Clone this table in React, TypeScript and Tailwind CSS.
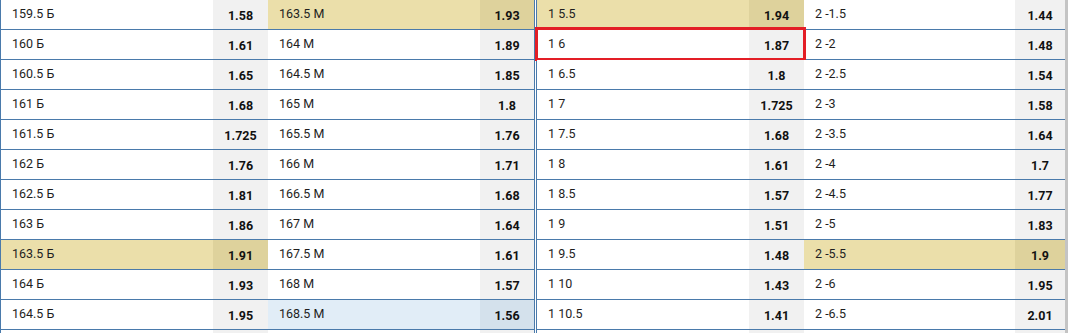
type Cell = { label: string; odds: string; hl?: 'yellow' | 'blue' };

// last row of each column is only a few pixels tall on screen, so it stays blank
const colA: Cell[] = [
  { label: '159.5 Б', odds: '1.58' },
  { label: '160 Б', odds: '1.61' },
  { label: '160.5 Б', odds: '1.65' },
  { label: '161 Б', odds: '1.68' },
  { label: '161.5 Б', odds: '1.725' },
  { label: '162 Б', odds: '1.76' },
  { label: '162.5 Б', odds: '1.81' },
  { label: '163 Б', odds: '1.86' },
  { label: '163.5 Б', odds: '1.91', hl: 'yellow' },
  { label: '164 Б', odds: '1.93' },
  { label: '164.5 Б', odds: '1.95' },
  { label: '', odds: '' },
];

const colB: Cell[] = [
  { label: '163.5 М', odds: '1.93', hl: 'yellow' },
  { label: '164 М', odds: '1.89' },
  { label: '164.5 М', odds: '1.85' },
  { label: '165 М', odds: '1.8' },
  { label: '165.5 М', odds: '1.76' },
  { label: '166 М', odds: '1.71' },
  { label: '166.5 М', odds: '1.68' },
  { label: '167 М', odds: '1.64' },
  { label: '167.5 М', odds: '1.61' },
  { label: '168 М', odds: '1.57' },
  { label: '168.5 М', odds: '1.56', hl: 'blue' },
  { label: '', odds: '' },
];

const colC: Cell[] = [
  { label: '1 5.5', odds: '1.94', hl: 'yellow' },
  { label: '1 6', odds: '1.87' },
  { label: '1 6.5', odds: '1.8' },
  { label: '1 7', odds: '1.725' },
  { label: '1 7.5', odds: '1.68' },
  { label: '1 8', odds: '1.61' },
  { label: '1 8.5', odds: '1.57' },
  { label: '1 9', odds: '1.51' },
  { label: '1 9.5', odds: '1.48' },
  { label: '1 10', odds: '1.43' },
  { label: '1 10.5', odds: '1.41' },
  { label: '', odds: '' },
];

const colD: Cell[] = [
  { label: '2 -1.5', odds: '1.44' },
  { label: '2 -2', odds: '1.48' },
  { label: '2 -2.5', odds: '1.54' },
  { label: '2 -3', odds: '1.58' },
  { label: '2 -3.5', odds: '1.64' },
  { label: '2 -4', odds: '1.7' },
  { label: '2 -4.5', odds: '1.77' },
  { label: '2 -5', odds: '1.83' },
  { label: '2 -5.5', odds: '1.9', hl: 'yellow' },
  { label: '2 -6', odds: '1.95' },
  { label: '2 -6.5', odds: '2.01' },
  { label: '', odds: '' },
];

function labelBg(c: Cell) {
  if (c.hl === 'yellow') return 'bg-[#ebdfaa]';
  if (c.hl === 'blue') return 'bg-[#e1edf7]';
  return 'bg-white';
}

function oddsBg(c: Cell) {
  if (c.hl === 'yellow') return 'bg-[#ded29c]';
  if (c.hl === 'blue') return 'bg-[#d4e1ec]';
  return 'bg-[#f1f1f1]';
}

function Pair({ c, lw, ow }: { c: Cell; lw: string; ow: string }) {
  return (
    <>
      <div className={`${lw} ${labelBg(c)} h-full pl-[11px] pt-[6px] leading-[15px] text-[#1e1e1e]`}>
        {c.label}
      </div>
      <div className={`${ow} ${oddsBg(c)} h-full pt-[8px] text-center leading-[15px] font-bold text-[#111]`}>
        {c.odds}
      </div>
    </>
  );
}

function Group({
  left,
  right,
  widths,
  className,
  marked,
}: {
  left: Cell[];
  right: Cell[];
  widths: [string, string, string, string];
  className: string;
  marked?: number;
}) {
  return (
    <div className={`flex flex-col border-[#4a7aab] ${className}`}>
      {left.map((c, i) => (
        <div key={i} className="relative flex h-[30px] shrink-0 border-b border-[#4a7aab]">
          <Pair c={c} lw={widths[0]} ow={widths[1]} />
          <Pair c={right[i]} lw={widths[2]} ow={widths[3]} />
          {marked === i && (
            <div className="pointer-events-none absolute left-[-2px] top-[-3px] h-[34px] w-[271px] border-[3px] border-[#e31e26]" />
          )}
        </div>
      ))}
    </div>
  );
}

export default function App() {
  return (
    <div className="h-[333px] w-[1076px] overflow-hidden bg-white font-['Roboto',sans-serif] text-[12.5px]">
      <div className="flex items-start">
        <Group
          left={colA}
          right={colB}
          widths={['w-[212px]', 'w-[55px]', 'w-[212px]', 'w-[54px]']}
          className="border-l border-r"
        />
        <div className="w-px shrink-0" />
        <Group
          left={colC}
          right={colD}
          widths={['w-[212px]', 'w-[55px]', 'w-[211px]', 'w-[50px]']}
          className="border-l"
          marked={1}
        />
        <div className="h-[333px] w-[3px] shrink-0 bg-[#c4c4c4]" />
      </div>
    </div>
  );
}
